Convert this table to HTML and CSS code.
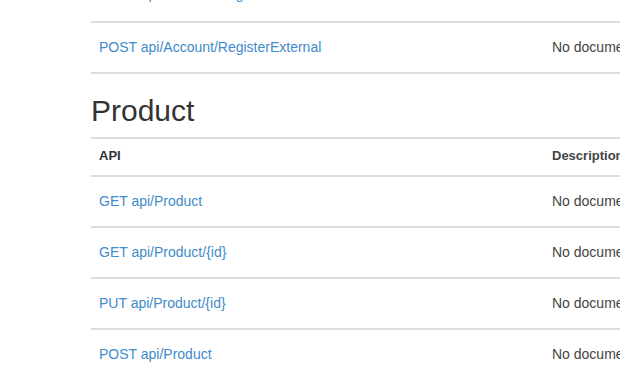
FILE: index.html
```html
<!DOCTYPE html>
<html lang="en">
<head>
<meta charset="utf-8">
<title>ASP.NET Web API Help Page</title>
<link rel="stylesheet" href="styles.css">
</head>
<body>
<div class="help-page">
  <table class="api-table api-table-tail">
    <tbody>
      <tr class="api-row-tall">
        <td class="api-name"><a href="#">POST api/Account/Register</a></td>
        <td class="api-documentation">No documentation available.</td>
      </tr>
      <tr>
        <td class="api-name"><a href="#">POST api/Account/RegisterExternal</a></td>
        <td class="api-documentation">No documentation available.</td>
      </tr>
    </tbody>
  </table>

  <h2 class="group-title">Product</h2>
  <table class="api-table">
    <thead>
      <tr>
        <th class="api-name">API</th>
        <th class="api-documentation">Description</th>
      </tr>
    </thead>
    <tbody>
      <tr>
        <td class="api-name"><a href="#">GET api/Product</a></td>
        <td class="api-documentation">No documentation available.</td>
      </tr>
      <tr>
        <td class="api-name"><a href="#">GET api/Product/{id}</a></td>
        <td class="api-documentation">No documentation available.</td>
      </tr>
      <tr>
        <td class="api-name"><a href="#">PUT api/Product/{id}</a></td>
        <td class="api-documentation">No documentation available.</td>
      </tr>
      <tr>
        <td class="api-name"><a href="#">POST api/Product</a></td>
        <td class="api-documentation">No documentation available.</td>
      </tr>
      <tr>
        <td class="api-name"><a href="#">DELETE api/Product/{id}</a></td>
        <td class="api-documentation">No documentation available.</td>
      </tr>
    </tbody>
  </table>
</div>
</body>
</html>
```

FILE: styles.css
```css
html, body {
  margin: 0;
  padding: 0;
  background: #fff;
  overflow: hidden;
}

body {
  font-family: "Liberation Sans", Arial, Helvetica, sans-serif;
  font-size: 14px;
  line-height: 20px;
  color: #333;
}

.help-page {
  width: 1140px;
  padding-left: 91px;
  margin-top: -32px;
}

.help-page a {
  color: #428bca;
  text-decoration: none;
}

.api-table {
  width: 1140px;
  border-collapse: collapse;
  border-spacing: 0;
  text-align: left;
}

.api-table th,
.api-table td {
  padding: 14px 8px 15px;
  vertical-align: top;
  border-top: 2px solid #dcdcdc;
}

.api-table .api-row-tall td {
  padding-bottom: 17px;
}

.api-table tbody tr:last-child td {
  border-bottom: 2px solid #dcdcdc;
}

.api-table th {
  font-size: 13px;
  font-weight: bold;
  padding: 7px 8px 9px;
  border-bottom: 2px solid #dcdcdc;
}

.api-table thead + tbody tr:first-child td {
  border-top: 0;
}

.api-name {
  width: 437px;
}

.api-documentation {
  color: #444;
}

.group-title {
  margin: 20px 0 10px;
  font-size: 30px;
  font-weight: normal;
  line-height: 33px;
  color: #333;
}
```
